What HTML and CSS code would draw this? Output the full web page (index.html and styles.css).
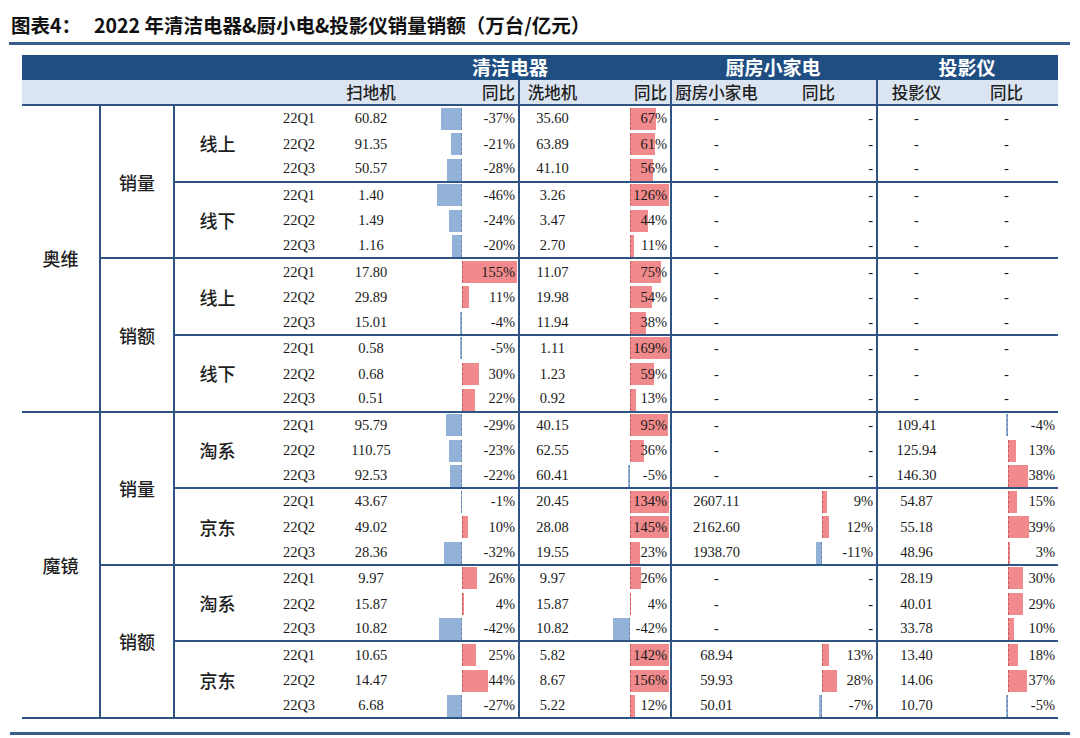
FILE: index.html
```html
<!DOCTYPE html>
<html lang="zh-CN">
<head>
<meta charset="utf-8">
<title>图表4</title>
<link rel="stylesheet" href="styles.css">
</head>
<body>
<div class="page">
  <div class="title"><span class="lab">图表4：</span><span>2022 年清洁电器&amp;厨小电&amp;投影仪销量销额（万台/亿元）</span></div>
  <div class="rule"></div>
  <div class="tbl">
    <div class="cols h1">
      <div class="h1a">清洁电器</div>
      <div class="h1b">厨房小家电</div>
      <div class="h1c">投影仪</div>
    </div>
    <div class="cols h2">
      <div class="hc v1">扫地机</div>
      <div class="hc y1 hr">同比</div>
      <div class="hc v2">洗地机</div>
      <div class="hc y2 hr">同比</div>
      <div class="hc v3">厨房小家电</div>
      <div class="hc y3">同比</div>
      <div class="hc v4">投影仪</div>
      <div class="hc y4">同比</div>
    </div>
    <div class="cols body">
      <!-- 奥维 销量 线上 -->
      <div class="r">
        <div class="c a">奥维</div><div class="c b">销量</div><div class="c ch">线上</div>
        <div class="c q">22Q1</div><div class="c v1">60.82</div><div class="c y y1"><i class="n" style="width:21px"></i><span>-37%</span></div><div class="c v2">35.60</div><div class="c y y2"><i class="p" style="width:26px"></i><span>67%</span></div><div class="c v3">-</div><div class="c y y3">-</div><div class="c v4">-</div><div class="c y y4 m">-</div>
      </div>
      <div class="r">
        <div class="c q">22Q2</div><div class="c v1">91.35</div><div class="c y y1"><i class="n" style="width:11px"></i><span>-21%</span></div><div class="c v2">63.89</div><div class="c y y2"><i class="p" style="width:25px"></i><span>61%</span></div><div class="c v3">-</div><div class="c y y3">-</div><div class="c v4">-</div><div class="c y y4 m">-</div>
      </div>
      <div class="r e">
        <div class="c q">22Q3</div><div class="c v1">50.57</div><div class="c y y1"><i class="n" style="width:15px"></i><span>-28%</span></div><div class="c v2">41.10</div><div class="c y y2"><i class="p" style="width:23px"></i><span>56%</span></div><div class="c v3">-</div><div class="c y y3">-</div><div class="c v4">-</div><div class="c y y4 m">-</div>
      </div>
      <!-- 奥维 销量 线下 -->
      <div class="r">
        <div class="c ch">线下</div>
        <div class="c q">22Q1</div><div class="c v1">1.40</div><div class="c y y1"><i class="n" style="width:25px"></i><span>-46%</span></div><div class="c v2">3.26</div><div class="c y y2"><i class="p" style="width:39px"></i><span>126%</span></div><div class="c v3">-</div><div class="c y y3">-</div><div class="c v4">-</div><div class="c y y4 m">-</div>
      </div>
      <div class="r">
        <div class="c q">22Q2</div><div class="c v1">1.49</div><div class="c y y1"><i class="n" style="width:13px"></i><span>-24%</span></div><div class="c v2">3.47</div><div class="c y y2"><i class="p" style="width:18px"></i><span>44%</span></div><div class="c v3">-</div><div class="c y y3">-</div><div class="c v4">-</div><div class="c y y4 m">-</div>
      </div>
      <div class="r e">
        <div class="c q">22Q3</div><div class="c v1">1.16</div><div class="c y y1"><i class="n" style="width:10px"></i><span>-20%</span></div><div class="c v2">2.70</div><div class="c y y2"><i class="p" style="width:4px"></i><span>11%</span></div><div class="c v3">-</div><div class="c y y3">-</div><div class="c v4">-</div><div class="c y y4 m">-</div>
      </div>
      <!-- 奥维 销额 线上 -->
      <div class="r">
        <div class="c b">销额</div><div class="c ch">线上</div>
        <div class="c q">22Q1</div><div class="c v1">17.80</div><div class="c y y1"><i class="p" style="width:55px"></i><span>155%</span></div><div class="c v2">11.07</div><div class="c y y2"><i class="p" style="width:31px"></i><span>75%</span></div><div class="c v3">-</div><div class="c y y3">-</div><div class="c v4">-</div><div class="c y y4 m">-</div>
      </div>
      <div class="r">
        <div class="c q">22Q2</div><div class="c v1">29.89</div><div class="c y y1"><i class="p" style="width:7px"></i><span>11%</span></div><div class="c v2">19.98</div><div class="c y y2"><i class="p" style="width:22px"></i><span>54%</span></div><div class="c v3">-</div><div class="c y y3">-</div><div class="c v4">-</div><div class="c y y4 m">-</div>
      </div>
      <div class="r e">
        <div class="c q">22Q3</div><div class="c v1">15.01</div><div class="c y y1"><i class="n" style="width:2px"></i><span>-4%</span></div><div class="c v2">11.94</div><div class="c y y2"><i class="p" style="width:16px"></i><span>38%</span></div><div class="c v3">-</div><div class="c y y3">-</div><div class="c v4">-</div><div class="c y y4 m">-</div>
      </div>
      <!-- 奥维 销额 线下 -->
      <div class="r">
        <div class="c ch">线下</div>
        <div class="c q">22Q1</div><div class="c v1">0.58</div><div class="c y y1"><i class="n" style="width:2.5px"></i><span>-5%</span></div><div class="c v2">1.11</div><div class="c y y2"><i class="p" style="width:40px"></i><span>169%</span></div><div class="c v3">-</div><div class="c y y3">-</div><div class="c v4">-</div><div class="c y y4 m">-</div>
      </div>
      <div class="r">
        <div class="c q">22Q2</div><div class="c v1">0.68</div><div class="c y y1"><i class="p" style="width:17px"></i><span>30%</span></div><div class="c v2">1.23</div><div class="c y y2"><i class="p" style="width:24px"></i><span>59%</span></div><div class="c v3">-</div><div class="c y y3">-</div><div class="c v4">-</div><div class="c y y4 m">-</div>
      </div>
      <div class="r e">
        <div class="c q">22Q3</div><div class="c v1">0.51</div><div class="c y y1"><i class="p" style="width:13px"></i><span>22%</span></div><div class="c v2">0.92</div><div class="c y y2"><i class="p" style="width:6px"></i><span>13%</span></div><div class="c v3">-</div><div class="c y y3">-</div><div class="c v4">-</div><div class="c y y4 m">-</div>
      </div>
      <!-- 魔镜 销量 淘系 -->
      <div class="r">
        <div class="c a">魔镜</div><div class="c b">销量</div><div class="c ch">淘系</div>
        <div class="c q">22Q1</div><div class="c v1">95.79</div><div class="c y y1"><i class="n" style="width:16px"></i><span>-29%</span></div><div class="c v2">40.15</div><div class="c y y2"><i class="p" style="width:38px"></i><span>95%</span></div><div class="c v3">-</div><div class="c y y3">-</div><div class="c v4">109.41</div><div class="c y y4"><i class="n" style="width:1.5px"></i><span>-4%</span></div>
      </div>
      <div class="r">
        <div class="c q">22Q2</div><div class="c v1">110.75</div><div class="c y y1"><i class="n" style="width:13px"></i><span>-23%</span></div><div class="c v2">62.55</div><div class="c y y2"><i class="p" style="width:14px"></i><span>36%</span></div><div class="c v3">-</div><div class="c y y3">-</div><div class="c v4">125.94</div><div class="c y y4"><i class="p" style="width:8px"></i><span>13%</span></div>
      </div>
      <div class="r e">
        <div class="c q">22Q3</div><div class="c v1">92.53</div><div class="c y y1"><i class="n" style="width:12px"></i><span>-22%</span></div><div class="c v2">60.41</div><div class="c y y2"><i class="n" style="width:2.5px"></i><span>-5%</span></div><div class="c v3">-</div><div class="c y y3">-</div><div class="c v4">146.30</div><div class="c y y4"><i class="p" style="width:20px"></i><span>38%</span></div>
      </div>
      <!-- 魔镜 销量 京东 -->
      <div class="r">
        <div class="c ch">京东</div>
        <div class="c q">22Q1</div><div class="c v1">43.67</div><div class="c y y1"><i class="n" style="width:0.5px"></i><span>-1%</span></div><div class="c v2">20.45</div><div class="c y y2"><i class="p" style="width:39px"></i><span>134%</span></div><div class="c v3">2607.11</div><div class="c y y3"><i class="p" style="width:5px"></i><span>9%</span></div><div class="c v4">54.87</div><div class="c y y4"><i class="p" style="width:9px"></i><span>15%</span></div>
      </div>
      <div class="r">
        <div class="c q">22Q2</div><div class="c v1">49.02</div><div class="c y y1"><i class="p" style="width:6px"></i><span>10%</span></div><div class="c v2">28.08</div><div class="c y y2"><i class="p" style="width:39px"></i><span>145%</span></div><div class="c v3">2162.60</div><div class="c y y3"><i class="p" style="width:7px"></i><span>12%</span></div><div class="c v4">55.18</div><div class="c y y4"><i class="p" style="width:21px"></i><span>39%</span></div>
      </div>
      <div class="r e">
        <div class="c q">22Q3</div><div class="c v1">28.36</div><div class="c y y1"><i class="n" style="width:18px"></i><span>-32%</span></div><div class="c v2">19.55</div><div class="c y y2"><i class="p" style="width:10px"></i><span>23%</span></div><div class="c v3">1938.70</div><div class="c y y3"><i class="n" style="width:6.5px"></i><span>-11%</span></div><div class="c v4">48.96</div><div class="c y y4"><i class="p" style="width:2px"></i><span>3%</span></div>
      </div>
      <!-- 魔镜 销额 淘系 -->
      <div class="r">
        <div class="c b">销额</div><div class="c ch">淘系</div>
        <div class="c q">22Q1</div><div class="c v1">9.97</div><div class="c y y1"><i class="p" style="width:15px"></i><span>26%</span></div><div class="c v2">9.97</div><div class="c y y2"><i class="p" style="width:10.5px"></i><span>26%</span></div><div class="c v3">-</div><div class="c y y3">-</div><div class="c v4">28.19</div><div class="c y y4"><i class="p" style="width:15.5px"></i><span>30%</span></div>
      </div>
      <div class="r">
        <div class="c q">22Q2</div><div class="c v1">15.87</div><div class="c y y1"><i class="p" style="width:2px"></i><span>4%</span></div><div class="c v2">15.87</div><div class="c y y2"><i class="p" style="width:1px"></i><span>4%</span></div><div class="c v3">-</div><div class="c y y3">-</div><div class="c v4">40.01</div><div class="c y y4"><i class="p" style="width:15px"></i><span>29%</span></div>
      </div>
      <div class="r e">
        <div class="c q">22Q3</div><div class="c v1">10.82</div><div class="c y y1"><i class="n" style="width:23px"></i><span>-42%</span></div><div class="c v2">10.82</div><div class="c y y2"><i class="n" style="width:17.5px"></i><span>-42%</span></div><div class="c v3">-</div><div class="c y y3">-</div><div class="c v4">33.78</div><div class="c y y4"><i class="p" style="width:6px"></i><span>10%</span></div>
      </div>
      <!-- 魔镜 销额 京东 -->
      <div class="r">
        <div class="c ch">京东</div>
        <div class="c q">22Q1</div><div class="c v1">10.65</div><div class="c y y1"><i class="p" style="width:14px"></i><span>25%</span></div><div class="c v2">5.82</div><div class="c y y2"><i class="p" style="width:39px"></i><span>142%</span></div><div class="c v3">68.94</div><div class="c y y3"><i class="p" style="width:7px"></i><span>13%</span></div><div class="c v4">13.40</div><div class="c y y4"><i class="p" style="width:10px"></i><span>18%</span></div>
      </div>
      <div class="r">
        <div class="c q">22Q2</div><div class="c v1">14.47</div><div class="c y y1"><i class="p" style="width:25.5px"></i><span>44%</span></div><div class="c v2">8.67</div><div class="c y y2"><i class="p" style="width:39px"></i><span>156%</span></div><div class="c v3">59.93</div><div class="c y y3"><i class="p" style="width:15px"></i><span>28%</span></div><div class="c v4">14.06</div><div class="c y y4"><i class="p" style="width:19.5px"></i><span>37%</span></div>
      </div>
      <div class="r e">
        <div class="c q">22Q3</div><div class="c v1">6.68</div><div class="c y y1"><i class="n" style="width:15px"></i><span>-27%</span></div><div class="c v2">5.22</div><div class="c y y2"><i class="p" style="width:5px"></i><span>12%</span></div><div class="c v3">50.01</div><div class="c y y3"><i class="n" style="width:3.5px"></i><span>-7%</span></div><div class="c v4">10.70</div><div class="c y y4"><i class="n" style="width:1.5px"></i><span>-5%</span></div>
      </div>
    </div>
  </div>
  <div class="rule2"></div>
</div>
</body>
</html>
```

FILE: styles.css
```css
* { box-sizing: border-box; margin: 0; padding: 0; }
html, body { background: #fff; }
body {
  width: 1080px;
  height: 738px;
  overflow: hidden;
  font-family: "Liberation Serif", "Times New Roman", serif;
  color: #1a1a1a;
}
.title {
  display: flex;
  height: 42px;
  padding: 11px 0 0 11px;
  font: 700 19.5px/28px "Noto Sans CJK SC", "Noto Sans", sans-serif;
  color: #111;
}
.title .lab { margin-right: 13px; }
.rule {
  margin-left: 9px;
  width: 1061px;
  height: 3px;
  background: #3a5d8c;
}
.tbl {
  margin: 10px 0 0 22px;
  width: 1036px;
}
.cols {
  display: grid;
  grid-template-columns: 77px 74px 91px 70px 74px 110px 67px 85px 91px 115px 79px 103px;
}
.h1 {
  height: 24.5px;
  background: #1f4e82;
  color: #fff;
  font: 700 19px/24.5px "Noto Sans CJK SC", sans-serif;
}
.h1a { grid-column: 5 / 9; text-align: center; padding-left: 16px; }
.h1b { grid-column: 9 / 11; text-align: center; }
.h1c { grid-column: 11 / 13; text-align: center; }
.h2 {
  height: 26.5px;
  background: #dbe5f1;
  border-bottom: 2px solid #2f5383;
  font: 500 16.5px/24.5px "Noto Sans CJK SC", sans-serif;
  color: #1e1e1e;
}
.hc { text-align: center; }
.hc.hr { text-align: right; padding-right: 3px; }
.body {
  grid-template-rows: repeat(24, 25.555px);
  font-size: 14.5px;
}
.r { display: contents; }
.c {
  display: flex;
  align-items: center;
  justify-content: center;
  white-space: nowrap;
}
.a, .b, .ch {
  font: 500 18px/1 "Noto Sans CJK SC", sans-serif;
  color: #1e1e1e;
  border-bottom: 2px solid #2f5383;
}
.a { grid-column: 1; grid-row: span 12; }
.b { grid-column: 2; grid-row: span 6; }
.ch { grid-column: 3; grid-row: span 3; padding-right: 4px; }
.q { grid-column: 4; }
.v1 { grid-column: 5; }
.y1 { grid-column: 6; --ax: 54px; }
.v2 { grid-column: 7; }
.y2 { grid-column: 8; --ax: 45px; }
.v3 { grid-column: 9; }
.y3 { grid-column: 10; --ax: 61px; }
.v4 { grid-column: 11; }
.y4 { grid-column: 12; --ax: 52.5px; }
.b, .ch, .v2, .v3, .v4 { border-left: 2px solid #2f5383; }
.e > .c { border-bottom: 2px solid #2f5383; }
.y {
  position: relative;
  justify-content: flex-end;
  padding-right: 3px;
}
.y.m { justify-content: center; padding-right: 0; }
.y span { position: relative; }
.y i {
  position: absolute;
  top: 1.5px;
  height: 22px;
}
.y i.p {
  left: var(--ax);
  background: #f08a8c;
  border-left: 1px dashed #c05a5e;
}
.y i.n {
  right: calc(100% - var(--ax));
  background: #93b2da;
  border-right: 1px dashed #6a86ad;
}
.rule2 {
  margin: 13px 0 0 10px;
  width: 1060px;
  height: 3px;
  background: #3a5d8c;
}
```
